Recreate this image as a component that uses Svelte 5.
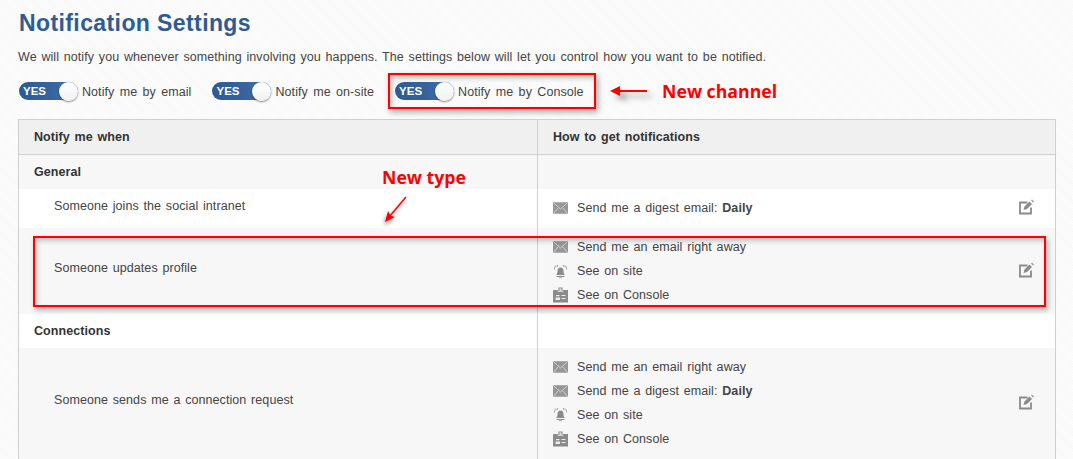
<script>
  const mail = 'mail', bell = 'bell', cons = 'cons';
  const rows = [
    { type: 'group', label: 'General', h: 34 },
    { type: 'row', label: 'Someone joins the social intranet', h: 39, items: [{ i: mail, t: 'Send me a digest email: ', b: 'Daily' }] },
    { type: 'row', label: 'Someone updates profile', h: 86, alt: true, nudge: true, items: [{ i: mail, t: 'Send me an email right away' }, { i: bell, t: 'See on site' }, { i: cons, t: 'See on Console' }] },
    { type: 'group', label: 'Connections', h: 34, white: true },
    { type: 'row', label: 'Someone sends me a connection request', h: 111, alt: true, items: [{ i: mail, t: 'Send me an email right away' }, { i: mail, t: 'Send me a digest email: ', b: 'Daily' }, { i: bell, t: 'See on site' }, { i: cons, t: 'See on Console' }] }
  ];
  const toggles = ['Notify me by email', 'Notify me on-site'];
</script>

{#snippet toggle(label)}
  <div class="tog">
    <div class="switch"><span class="yes">YES</span><span class="knob"></span></div>
    <span class="toglabel">{label}</span>
  </div>
{/snippet}

{#snippet icon(kind)}
  {#if kind === 'mail'}
    <svg class="ic" width="15" height="12" viewBox="0 0 15 12"><rect width="15" height="11.500" y="0.250" fill="#979797"/><path d="M0.500 .8 7.500 7l7-6.200M0.500 11.500 5.500 5.500M14.500 11.500 9.500 5.500" fill="none" stroke="#d4d4d4" stroke-width="0.900"/></svg>
  {:else if kind === 'bell'}
    <svg class="ic" width="15" height="15" viewBox="0 0 15 15"><path d="M7.500 3.500c-2 0-3 1.500-3 3.500 0 2.200-.7 3-1.300 4h8.600c-.6-1-1.300-1.800-1.300-4 0-2-1-3.500-3-3.500z" fill="#8a8a8a"/><path d="M3.500 12.500h8" stroke="#8a8a8a" stroke-width="1"/><path d="M6 13.800h3" stroke="#aaa" stroke-width="1"/><path d="M3.200 1.500C1.800 2.500 1.300 4 1.500 5.500M11.800 1.500c1.400 1 1.900 2.500 1.700 4M5 1C4.300 1.600 4 2.500 4 3.200M10 1c.7.600 1 1.500 1 2.200" fill="none" stroke="#8a8a8a" stroke-width="0.900"/></svg>
  {:else}
    <svg class="ic" width="15" height="16" viewBox="0 0 15 16"><path d="M0 3h5.500V.500h4V3H15v12.500H0z" fill="#8a8a8a"/><path d="M6.500 1.500h2v2h-2zM4.500 3.800h6v1h-6zM3 8h3.500v1.300H3zM2.500 10.500h4.500v2.500H2.500zM8.500 8H12.500v1H8.500zM8.500 11H12.500v1H8.500z" fill="#ececec"/></svg>
  {/if}
{/snippet}

{#snippet edit()}
  <svg class="edit" width="16" height="16" viewBox="0 0 16 16"><path d="M8.500 3.500H1V14.500H12V8.500" fill="none" stroke="#8a8a8a" stroke-width="1.800"/><path d="M4.500 11 5.500 7.500 10.500 2.500 13 5 8 10z" fill="#8a8a8a"/><path d="M12 1.500 13 .5 15 2.500 14 3.500z" fill="#9a9a9a"/></svg>
{/snippet}

<main class="page">
  <h1>Notification Settings</h1>
  <p class="intro">We will notify you whenever something involving you happens. The settings below will let you control how you want to be notified.</p>
  <div class="toggles">
    {#each toggles as t}{@render toggle(t)}{/each}
    <div class="third">{@render toggle('Notify me by Console')}</div>
    <svg class="arrow-h" width="37" height="16" viewBox="0 0 37 16"><path d="M8 8h29" stroke="#ff0000" stroke-width="2" /><path d="M0 8 10 3v10z" fill="#ff0000"/></svg>
    <span class="note channel">New channel</span>
  </div>

  <div class="table">
    <div class="line head">
      <div class="c1">Notify me when</div>
      <div class="c2">How to get notifications</div>
    </div>
    {#each rows as r}
      {#if r.type === 'group'}
        <div class="line group" class:white={r.white} style="height:{r.h}px">
          <div class="c1">{r.label}</div>
          <div class="c2"></div>
        </div>
      {:else}
        <div class="line row" class:alt={r.alt} class:nudge={r.nudge} style="height:{r.h}px">
          <div class="c1 lab">{r.label}</div>
          <div class="c2 ways">
            <div class="items">
              {#each r.items as it}
                <div class="item"><span class="icbox">{@render icon(it.i)}</span><span>{it.t}{#if it.b}<b>{it.b}</b>{/if}</span></div>
              {/each}
            </div>
            {@render edit()}
          </div>
        </div>
      {/if}
    {/each}
  </div>

  <span class="note type">New type</span>
  <svg class="arrow-d" width="26" height="32" viewBox="0 0 26 32"><path d="M22 2 5 22" stroke="#ff0000" stroke-width="1.500"/><path d="M1 27 4 16l2.500 4.500L11 22z" fill="#ff0000"/></svg>
  <div class="frame"></div>
</main>

<style>
  :global(body) { margin: 0; }
  .page {
    position: relative;
    width: 1073px;
    height: 459px;
    overflow: hidden;
    box-sizing: border-box;
    padding: 0 17px 0 18px;
    font-family: "Liberation Sans", Arial, sans-serif;
    font-size: 12.5px;
    color: #444;
    word-spacing: 1.2px;
    letter-spacing: 0.07px;
    background: repeating-linear-gradient(45deg, #fcfcfc 0 1px, #f9f9f9 1px 2px);
  }
  h1 {
    margin: 0;
    padding: 10px 0 0 1px;
    font-size: 23px;
    line-height: 27px;
    font-weight: 700;
    color: #2f5b91;
    letter-spacing: 0.4px;
    word-spacing: 0;
  }
  .intro { margin: 12px 0 0; line-height: 16px; height: 16px; white-space: nowrap; }
  .toggles { display: flex; align-items: center; height: 36px; margin-top: 8px; padding-left: 1px; }
  .tog { display: flex; align-items: center; gap: 4px; word-spacing: 1.8px; }
  .toglabel { padding-top: 2px; }
  .tog + .tog { margin-left: 21px; }
  .third {
    margin-left: 14px;
    width: 208px;
    height: 36px;
    box-sizing: border-box;
    border: 2px solid #ff0000;
    display: flex;
    align-items: center;
    padding-left: 5px;
    box-shadow: 2px 3px 6px rgba(0, 0, 0, .35), inset 2px 3px 5px rgba(0, 0, 0, .25);
  }
  .switch {
    position: relative;
    width: 59px;
    height: 18px;
    border-radius: 9px;
    background: linear-gradient(90deg, #2c5a96, #38659f 60%, #4a78ad);
    flex: none;
  }
  .yes {
    position: absolute;
    left: 4px;
    top: 2px;
    font-size: 11.500px;
    line-height: 14px;
    color: #fff;
    font-weight: 700;
    letter-spacing: 0;
  }
  .knob {
    position: absolute;
    right: 0;
    top: 0;
    width: 19px;
    height: 19px;
    border-radius: 50%;
    background: linear-gradient(#fff, #f0f0f0);
    box-shadow: 0 1px 2px rgba(0, 0, 0, .5);
  }
  .arrow-h { margin-left: 14px; filter: drop-shadow(5px 5px 3px rgba(0,0,0,.4)); overflow: visible; }
  .note {
    font-family: "Open Sans", "Noto Sans", sans-serif;
    font-weight: 700;
    color: #ff0000;
    font-size: 17.7px;
    word-spacing: 0;
    letter-spacing: 0;
  }
  .channel { margin-left: 15px; }
  .type { position: absolute; left: 382px; top: 165px; line-height: 24px; }
  .arrow-d { position: absolute; left: 384px; top: 195px; filter: drop-shadow(-1px 3px 2px rgba(0,0,0,.4)); }
  .table {
    margin-top: 10px;
    border: 1px solid #cfcfcf;
    border-bottom: 0;
    background: #fff;
  }
  .line { display: flex; box-sizing: border-box; }
  .c1 { width: 518px; flex: none; box-sizing: border-box; padding-left: 15px; }
  .c2 { flex: 1; box-sizing: border-box; border-left: 1px solid #cfcfcf; padding-left: 15px; min-width: 0; }
  .head {
    height: 35px;
    background: #f0f0f0;
    border-bottom: 1px solid #cfcfcf;
    font-weight: 700;
    color: #333;
    line-height: 34px;
  }
  .group { background: #f7f7f7; font-weight: 700; color: #333; line-height: 35px; }
  .group.white { background: #fff; }
  .row { background: #fff; }
  .row.alt { background: #f7f7f7; }
  .lab { display: flex; align-items: center; padding-left: 35px; padding-bottom: 6px; }
  .row:last-child .lab { padding-bottom: 8px; }
  .ways { display: flex; align-items: center; padding-right: 20px; padding-bottom: 2px; }
  .nudge .ways { padding-bottom: 0; }
  .items { flex: 1; display: flex; flex-direction: column; gap: 8px; }
  .item { display: flex; align-items: center; height: 16px; }
  .icbox { width: 24px; flex: none; display: flex; align-items: center; }
  .ic { display: block; }
  .edit { flex: none; margin-bottom: 2px; }
  .frame {
    position: absolute;
    left: 33px;
    top: 236px;
    width: 1013px;
    height: 71px;
    box-sizing: border-box;
    border: 2px solid #ff0000;
    box-shadow: 2px 3px 5px rgba(0, 0, 0, .3), inset 2px 3px 5px rgba(0, 0, 0, .22);
  }
</style>
